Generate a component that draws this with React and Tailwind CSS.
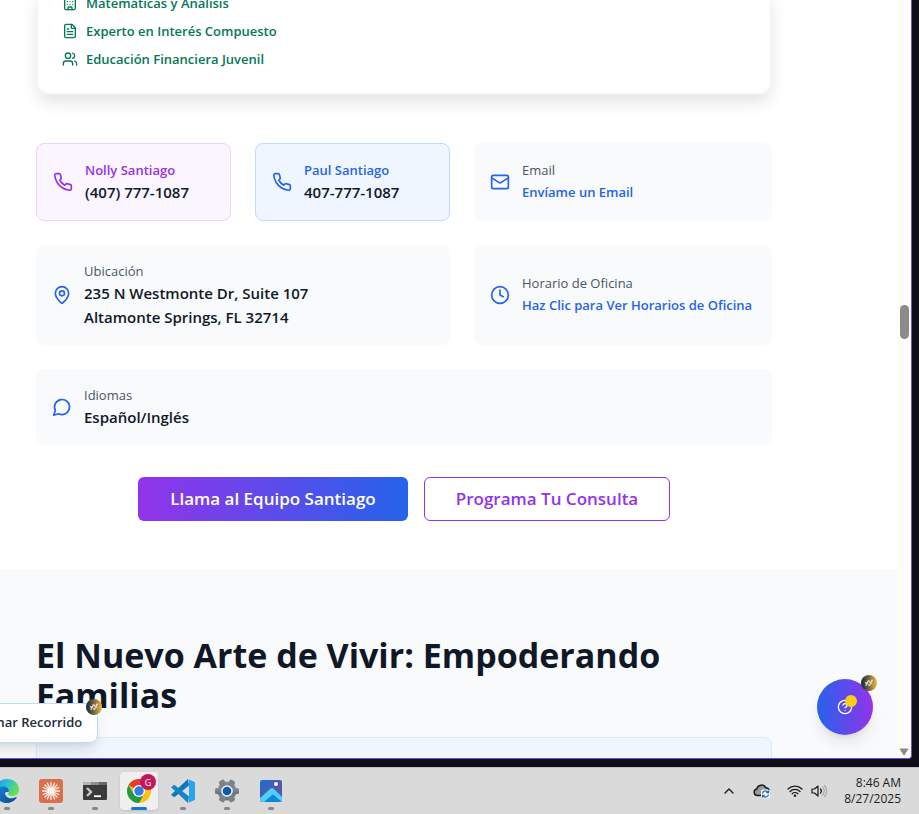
import React from "react";
import { Building, FileText, Users, Mail, Clock, MapPin, ChevronUp } from "lucide-react";

const fontClass = "font-['Segoe_UI','Open_Sans','Noto_Sans',sans-serif]";

function Stroke({ className, children }) {
  return (
    <svg viewBox="0 0 24 24" fill="none" stroke="currentColor" strokeWidth="2" strokeLinecap="round" strokeLinejoin="round" className={className} aria-hidden="true">
      {children}
    </svg>
  );
}

function PhoneIcon({ className }) {
  return (
    <Stroke className={className}>
      <path d="M22 16.92v3a2 2 0 0 1-2.18 2 19.79 19.79 0 0 1-8.63-3.07 19.5 19.5 0 0 1-6-6 19.79 19.79 0 0 1-3.07-8.67A2 2 0 0 1 4.11 2h3a2 2 0 0 1 2 1.72 12.84 12.84 0 0 0 .7 2.81 2 2 0 0 1-.45 2.11L8.09 9.91a16 16 0 0 0 6 6l1.27-1.27a2 2 0 0 1 2.11-.45 12.84 12.84 0 0 0 2.81.7A2 2 0 0 1 22 16.92z" />
    </Stroke>
  );
}

function ChatIcon({ className }) {
  return (
    <Stroke className={className}>
      <path d="M7.9 20A9 9 0 1 0 4 16.1L2 22Z" />
    </Stroke>
  );
}

const skills = [
  { Icon: Building, text: "Matemáticas y Análisis" },
  { Icon: FileText, text: "Experto en Interés Compuesto" },
  { Icon: Users, text: "Educación Financiera Juvenil" },
];

function InfoCard({ icon, className = "bg-gray-50", children }) {
  return (
    <div className={"flex items-center gap-3 rounded-lg p-4 " + className}>
      {icon}
      <div className="whitespace-nowrap">{children}</div>
    </div>
  );
}

function SparkBadge({ className }) {
  return (
    <span className={"absolute flex size-4 items-center justify-center rounded-full bg-linear-to-r/srgb from-[#10283c] via-[#75673f] to-[#f5bd3c] " + className}>
      <svg viewBox="0 0 16 16" className="size-4" aria-hidden="true">
        <path d="M5 10.500l2.500-5M8.500 10.500l2.500-5M5 7.500l1.500 1M9 7l2 1.500" stroke="#ddd6c0" strokeWidth="1.300" strokeLinecap="round" />
        <circle cx="5" cy="8" r="0.900" fill="#ddd6c0" />
        <circle cx="8.300" cy="6.500" r="0.900" fill="#ddd6c0" />
        <circle cx="8" cy="10" r="0.900" fill="#ddd6c0" />
        <circle cx="11" cy="5.300" r="0.900" fill="#efe6cc" />
      </svg>
    </span>
  );
}

function EdgeLogo() {
  return (
    <svg viewBox="0 0 24 24" className="size-6">
      <defs>
        <linearGradient id="edgeTop" x1="0" y1="0" x2="1" y2="0.5">
          <stop offset="0" stopColor="#1b8fe0" />
          <stop offset="0.5" stopColor="#2bc0d8" />
          <stop offset="1" stopColor="#63e04e" />
        </linearGradient>
        <linearGradient id="edgeLow" x1="0" y1="0" x2="1" y2="1">
          <stop offset="0" stopColor="#1a86dc" />
          <stop offset="1" stopColor="#0b4a95" />
        </linearGradient>
      </defs>
      <path d="M0 12a12 12 0 0 0 21.500 7.200c.6-.9 0-1.500-1-1C15 21 9.500 18 10 13z" fill="url(#edgeLow)" />
      <path d="M0 12c0-3 4-5 8-5 4 0 6.500 2.500 6.500 5.500l-4.500 1c-.8 5 4 8 9 6.500C16 24 13 24 12 24 5.400 24 0 18.600 0 12z" fill="url(#edgeLow)" />
      <path d="M0 12C0 5 5 0 12 0c7 0 12 5 12 10.500 0 4-3 6.500-6.500 6.500-3 0-4.500-1-4.500-2 0-.8 1-1.300 1-3C14 9.500 11.500 7.500 8.500 7.500 4 7.500 0 10 0 12z" fill="url(#edgeTop)" />
    </svg>
  );
}

function ClaudeLogo() {
  return (
    <svg viewBox="0 0 24 24" className="size-6">
      <rect width="24" height="24" rx="3" fill="#d96f4b" />
      <path d="M12 3.500v17M3.500 12h17M6 6l12 12M18 6L6 18M8.500 4.200l7 15.600M15.500 4.200l-7 15.600M4.200 8.500l15.600 7M19.800 8.500l-15.600 7" stroke="#fff5ee" strokeWidth="1.300" strokeLinecap="round" />
      <circle cx="12" cy="12" r="3" fill="#fff5ee" />
    </svg>
  );
}

function TerminalLogo() {
  return (
    <svg viewBox="0 0 24 24" className="size-6">
      <rect y="3" width="24" height="18" rx="1" fill="#3a3a3a" />
      <path d="M0 6V4a1 1 0 0 1 1-1h7v3z" fill="#b5b5b5" />
      <path d="M8 3h8v3H8z" fill="#8d8d8d" />
      <path d="M16 3h7a1 1 0 0 1 1 1v2h-8z" fill="#686868" />
      <path d="M4 9l4 4-4 4" fill="none" stroke="#c9c9c9" strokeWidth="2.400" />
      <path d="M11 17.200h7" stroke="#fff" strokeWidth="1.800" />
    </svg>
  );
}

function ChromeLogo() {
  return (
    <svg viewBox="0 0 24 24" className="size-6">
      <circle cx="12" cy="12" r="12" fill="#fbc116" />
      <path d="M12 12L1.610 6A12 12 0 0 1 22.390 6H12z" fill="#e33b2e" />
      <path d="M1.610 6A12 12 0 0 0 12 24l5.200-9H12L6.800 15z" fill="#249a48" />
      <circle cx="12" cy="12" r="6" fill="#fff" />
      <circle cx="12" cy="12" r="4.700" fill="#2f7de9" />
    </svg>
  );
}

function CodeLogo() {
  return (
    <svg viewBox="0 0 24 24" className="size-6">
      <path d="M17 0l1 6.500L3.300 18.200 0 15.700z" fill="#0b78bd" />
      <path d="M17 24l1-6.500L3.300 5.800 0 8.300z" fill="#1484cb" />
      <path d="M17 0l6 2.700a1.500 1.500 0 0 1 1 1.400v15.800a1.500 1.500 0 0 1-1 1.400L17 24c.6-.6 1-1 1-2V2c0-1-.4-1.400-1-2z" fill="#27a4ee" />
    </svg>
  );
}

function SettingsLogo() {
  return (
    <svg viewBox="0 0 24 24" className="size-6">
      <defs>
        <linearGradient id="gear" x1="0" y1="0" x2="0" y2="1">
          <stop offset="0" stopColor="#8a9299" />
          <stop offset="1" stopColor="#666e76" />
        </linearGradient>
      </defs>
      <g fill="url(#gear)">
        <circle cx="12" cy="12" r="9.500" />
        <rect x="0" y="9" width="24" height="6" rx="1.500" />
      </g>
      <g fill="#7a828a">
        <rect x="0" y="9" width="24" height="6" rx="1.500" transform="rotate(60 12 12)" />
        <rect x="0" y="9" width="24" height="6" rx="1.500" transform="rotate(120 12 12)" />
      </g>
      <circle cx="12" cy="12" r="5.800" fill="#eef2f5" />
      <circle cx="12" cy="12" r="4.300" fill="#0f5cae" />
    </svg>
  );
}

function PhotosLogo() {
  return (
    <svg viewBox="0 0 24 24" className="size-6">
      <defs>
        <linearGradient id="sky" x1="0" y1="0" x2="1" y2="1">
          <stop offset="0" stopColor="#1173cf" />
          <stop offset="0.600" stopColor="#5a55ad" />
          <stop offset="1" stopColor="#1f6fd0" />
        </linearGradient>
        <clipPath id="photoFrame">
          <rect x="1" y="1" width="22" height="22" rx="2" />
        </clipPath>
      </defs>
      <g clipPath="url(#photoFrame)">
        <rect width="24" height="24" fill="url(#sky)" />
        <path d="M0 20L11 10q2-2 4 0l9 9v6H0z" fill="#4dd0f8" />
        <path d="M4 24l9-8q1-1 2 0l9 8z" fill="#1184db" />
      </g>
      <circle cx="17" cy="5" r="2" fill="#fff" />
    </svg>
  );
}

const apps = [
  { name: "Edge", Logo: EdgeLogo },
  { name: "Claude", Logo: ClaudeLogo },
  { name: "Terminal", Logo: TerminalLogo },
  { name: "Chrome", Logo: ChromeLogo, active: true },
  { name: "Code", Logo: CodeLogo },
  { name: "Settings", Logo: SettingsLogo },
  { name: "Photos", Logo: PhotosLogo },
];

function Taskbar() {
  return (
    <footer className="mt-2 flex h-[47px] shrink-0 items-center justify-between border-t border-[#c9c0c3] bg-[#dadada] pr-[18px] text-[#1b1b1b]">
      <nav className="-ml-3 flex gap-[6px]">
        {apps.map(({ name, Logo, active }) => (
          <button
            key={name}
            aria-label={name}
            className={"relative flex h-[38px] w-[38px] items-center justify-center rounded " + (active ? "bg-[#f0f0f0] shadow-sm" : "")}
          >
            <Logo />
            {active && (
              <span className="absolute top-[2px] right-[2px] flex size-4 items-center justify-center rounded-full bg-[#c2185b] text-[9px] leading-none text-white">G</span>
            )}
            <span className={"absolute bottom-0 h-[3px] rounded-full " + (active ? "w-4 bg-[#0f78d4]" : "w-[6px] bg-[#868686]")} />
          </button>
        ))}
      </nav>
      <div className="flex items-center">
        <ChevronUp className="mr-4 size-4" strokeWidth={2} />
        <svg viewBox="0 0 18 16" className="mr-4 h-4 w-[18px]" fill="none" aria-hidden="true">
          <path d="M8 12.500H4.500a3.300 3.300 0 0 1-.8-6.500A5 5 0 0 1 13 4.800a3.800 3.800 0 0 1 3.500 3.200v4.500z" fill="#9b9b9b" />
          <path d="M8 12.500H4.500a3.300 3.300 0 0 1-.8-6.500A5 5 0 0 1 13 4.800a3.800 3.800 0 0 1 3.300 2.700" stroke="#1b1b1b" strokeWidth="1.500" />
          <rect x="8" y="6.500" width="9" height="9" rx="2" fill="#f4f8fb" />
          <path d="M9.500 10.500a3 3 0 0 1 5.500-1.200M15.500 7.500v2.200h-2.200M15.500 11.500a3 3 0 0 1-5.500 1.200M9.500 14.500v-2.200h2.200" stroke="#1765ae" strokeWidth="1.200" />
        </svg>
        <svg viewBox="0 0 16 14" className="mr-2 h-[14px] w-4" fill="none" stroke="currentColor" strokeWidth="1.300" strokeLinecap="round" aria-hidden="true">
          <path d="M1 5a10 10 0 0 1 14 0M3 7.500a7 7 0 0 1 10 0M5.200 9.800a4 4 0 0 1 5.600 0" />
          <circle cx="8" cy="11.800" r="1.200" fill="currentColor" stroke="none" />
        </svg>
        <svg viewBox="0 0 17 14" className="mr-4 h-[14px] w-[17px]" fill="none" stroke="currentColor" strokeWidth="1.200" strokeLinecap="round" strokeLinejoin="round" aria-hidden="true">
          <path d="M1 5v4h2.500L7 12V2L3.500 5z" />
          <path d="M9.500 5a3 3 0 0 1 0 4" />
          <path d="M11.500 3a5.500 5.500 0 0 1 0 8M13.500 1.500a8 8 0 0 1 0 11" stroke="#aaa" />
        </svg>
        <div className="text-right text-[12px] leading-4 whitespace-nowrap">
          <div>8:46 AM</div>
          <div>8/27/2025</div>
        </div>
      </div>
    </footer>
  );
}

export default function App() {
  return (
    <div className={"flex h-screen flex-col overflow-hidden bg-[#0e0e16] " + fontClass}>
      <div className="relative mr-[7px] flex min-h-0 flex-1 overflow-hidden rounded-br border-r border-b border-[#6a52e8] bg-white">
        <main className="min-w-0 flex-1 overflow-hidden">
          <section className="-mt-[7px] pr-[125px] pb-12 pl-9">
            <ul className="mb-12 flex flex-col gap-2 rounded-b-xl border-2 border-t-0 border-gray-100 px-6 pb-6 text-[13px] leading-5 font-semibold text-[#047857] shadow-[0_8px_18px_-3px_rgb(0_0_0/0.14)]">
              {skills.map(({ Icon, text }) => (
                <li key={text} className="flex items-center gap-2">
                  <Icon className="size-4" />
                  {text}
                </li>
              ))}
            </ul>

            <div className="grid grid-cols-[1fr_1fr_298px] gap-6">
              <InfoCard className="border border-purple-200 bg-purple-50" icon={<PhoneIcon className="size-5 text-[#9333ea]" />}>
                <p className="text-[13px] leading-5 font-semibold text-[#9333ea]">Nolly Santiago</p>
                <p className="text-[15px] leading-6 font-semibold text-gray-900">(407) 777-1087</p>
              </InfoCard>
              <InfoCard className="border border-blue-200 bg-blue-50" icon={<PhoneIcon className="size-5 text-[#2563eb]" />}>
                <p className="text-[13px] leading-5 font-semibold text-[#2563eb]">Paul Santiago</p>
                <p className="text-[15px] leading-6 font-semibold text-gray-900">407-777-1087</p>
              </InfoCard>
              <InfoCard icon={<Mail className="size-5 text-[#2563eb]" />}>
                <p className="text-[13px] leading-5 text-gray-600">Email</p>
                <button className="block text-[13px] leading-6 font-semibold text-[#2563eb]">Envíame un Email</button>
              </InfoCard>
              <InfoCard className="col-span-2 bg-gray-50" icon={<MapPin className="size-5 text-[#2563eb]" />}>
                <p className="text-[13px] leading-5 text-gray-600">Ubicación</p>
                <p className="text-[15px] leading-6 font-semibold text-gray-900">
                  235 N Westmonte Dr, Suite 107
                  <br />
                  Altamonte Springs, FL 32714
                </p>
              </InfoCard>
              <InfoCard icon={<Clock className="size-5 text-[#2563eb]" />}>
                <p className="text-[13px] leading-5 text-gray-600">Horario de Oficina</p>
                <button className="block text-[13px] leading-6 font-semibold text-[#2563eb]">Haz Clic para Ver Horarios de Oficina</button>
              </InfoCard>
              <InfoCard className="col-span-3 bg-gray-50" icon={<ChatIcon className="size-5 text-[#2563eb]" />}>
                <p className="text-[13px] leading-5 text-gray-600">Idiomas</p>
                <p className="text-[15px] leading-6 font-semibold text-gray-900">Español/Inglés</p>
              </InfoCard>
            </div>

            <div className="mt-8 flex justify-center gap-4 text-[17px] font-semibold whitespace-nowrap">
              <button className="h-11 w-[270px] rounded-md bg-linear-to-r/srgb from-[#9333ea] to-[#2563eb] text-white">Llama al Equipo Santiago</button>
              <button className="h-11 w-[246px] rounded-md border border-[#9333ea] bg-white text-[#9333ea]">Programa Tu Consulta</button>
            </div>
          </section>

          <section className="bg-gray-50 pt-[66px] pr-[125px] pb-16 pl-9">
            <h2 className="text-[34px] leading-10 font-bold text-gray-900">El Nuevo Arte de Vivir: Empoderando Familias</h2>
            <div className="mt-[22px] h-40 rounded-lg border border-blue-100 bg-blue-50" />
          </section>
        </main>

        <div className="relative w-[14px] shrink-0 bg-[#fcfcfc]" aria-hidden="true">
          <div className="absolute top-[305px] left-[3px] h-[34px] w-[9px] rounded-full bg-[#8b8b8b]" />
          <svg viewBox="0 0 10 8" className="absolute bottom-[2px] left-[2px] h-2 w-[10px]">
            <path d="M1 1h8L5 7z" fill="#8b8b8b" stroke="#8b8b8b" strokeLinejoin="round" />
          </svg>
        </div>

        <button className="absolute bottom-[15px] -left-6 h-10 w-[122px] rounded-lg border border-blue-200 bg-white pr-4 text-right text-[13px] font-semibold whitespace-nowrap text-gray-800 shadow-lg">
          Tomar Recorrido
          <SparkBadge className="-top-[5px] -right-[5px]" />
        </button>

        <button aria-label="Ayuda" className="absolute right-[38px] bottom-[23px] flex size-14 items-center justify-center rounded-full bg-linear-to-r/srgb from-[#2563eb] to-[#9333ea] text-white shadow-lg">
          <Stroke className="size-4">
            <circle cx="12" cy="12" r="10" />
            <path d="M9.090 9a3 3 0 0 1 5.830 1c0 2-3 3-3 3" />
            <path d="M12 17h.01" />
          </Stroke>
          <span className="absolute top-4 right-4 size-3 rounded-full bg-[#facc15]" />
          <SparkBadge className="-top-1 -right-1" />
        </button>
      </div>
      <Taskbar />
    </div>
  );
}
